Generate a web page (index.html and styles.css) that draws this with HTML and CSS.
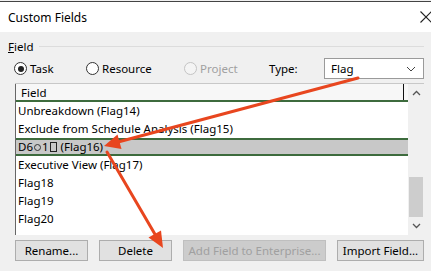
FILE: index.html
```html
<!DOCTYPE html>
<html lang="en">
<head>
    <meta charset="UTF-8">
    <title>Custom Fields</title>
    <link rel="stylesheet" href="styles.css">
</head>
<body>
    <div class="dialog">
        <div class="titlebar">
            <span class="title">Custom Fields</span>
            <svg class="close" width="12" height="12" viewBox="0 0 12 12">
                <path d="M0.5 0.5 L11.5 11.5 M11.5 0.5 L0.5 11.5" stroke="#222" stroke-width="1.1" fill="none"/>
            </svg>
        </div>

        <div class="content">
            <div class="group-label">
                <span><u>F</u>ield</span>
                <div class="group-line"></div>
            </div>

            <div class="options">
                <label class="opt opt-task"><span class="radio checked"></span>Task</label>
                <label class="opt opt-resource"><span class="radio"></span>Resource</label>
                <label class="opt opt-project disabled"><span class="radio"></span>Project</label>
                <span class="type-label">Type:</span>
                <div class="combo">
                    <span>Flag</span>
                    <svg width="10" height="6" viewBox="0 0 10 6">
                        <path d="M1 1 L5 5 L9 1" stroke="#444" stroke-width="1" fill="none"/>
                    </svg>
                </div>
            </div>

            <div class="list">
                <div class="grid">
                    <div class="grid-head">
                        <span>Field</span>
                        <div class="col-end"></div>
                    </div>
                    <div class="row">Unbreakdown (Flag14)</div>
                    <div class="row">Exclude from Schedule Analysis (Flag15)</div>
                    <div class="row selected">D6<span class="ring"></span>1<span class="tofu"></span> (Flag16)</div>
                    <div class="row">Executive View (Flag17)</div>
                    <div class="row">Flag18</div>
                    <div class="row">Flag19</div>
                    <div class="row">Flag20</div>
                </div>
                <div class="scrollbar">
                    <svg class="sb-arrow" width="9" height="6" viewBox="0 0 9 6">
                        <path d="M1 5 L4.5 1.5 L8 5" stroke="#555" stroke-width="1.3" fill="none"/>
                    </svg>
                    <div class="sb-track">
                        <div class="sb-thumb"></div>
                    </div>
                    <svg class="sb-arrow" width="9" height="6" viewBox="0 0 9 6">
                        <path d="M1 1 L4.5 4.5 L8 1" stroke="#555" stroke-width="1.3" fill="none"/>
                    </svg>
                </div>
            </div>

            <div class="buttons">
                <button class="btn btn-rename">Rename...</button>
                <button class="btn btn-delete">Delete</button>
                <button class="btn btn-add" disabled>Add Field to Enterprise...</button>
                <button class="btn btn-import">Import Field...</button>
            </div>
        </div>

        <!-- red annotation arrows drawn over the dialog -->
        <svg class="arrows" width="431" height="271" viewBox="0 0 431 271">
            <g stroke="#e8461f" stroke-width="3" stroke-linecap="round" fill="#e8461f">
                <line x1="358" y1="78" x2="118" y2="142"/>
                <line x1="107" y1="152" x2="156" y2="236"/>
            </g>
            <g fill="#e8461f">
                <polygon points="104,146 121.5,149 117.5,134.5"/>
                <polygon points="163,248 161,230.5 148.5,237.5"/>
            </g>
        </svg>
    </div>
</body>
</html>
```

FILE: styles.css
```css
body {
    margin: 0;
    padding: 0;
    font-family: "Noto Sans", "DejaVu Sans", sans-serif;
    font-size: 11.5px;
    color: #000;
    background: #f0f0f0;
}

.dialog {
    position: relative;
    width: 431px;
    height: 271px;
    overflow: hidden;
    background: #f0f0f0;
}

.titlebar {
    height: 30px;
    background: #fff;
    border-top: 1px solid #444;
    margin-top: 1px;
    display: flex;
    align-items: center;
    justify-content: space-between;
    padding-left: 8px;
}

.title {
    font-size: 12px;
}

.close {
    margin-right: -1px;
}

.content {
    padding: 0 7px 0 15px;
}

.group-label {
    display: flex;
    align-items: center;
    height: 16px;
    margin: 6px 0 0 -7px;
}

.group-line {
    flex: 1;
    height: 1px;
    background: #dcdcdc;
    margin-left: 6px;
}

.options {
    display: flex;
    align-items: center;
    height: 21px;
    margin-top: 4px;
    margin-left: -1px;
}

.opt {
    display: flex;
    align-items: center;
}

.opt-task {
    width: 72px;
}

.opt-resource {
    width: 98px;
}

.opt-project {
    width: 85px;
}

.disabled {
    color: #a0a0a0;
}

.radio {
    width: 11px;
    height: 11px;
    border: 1px solid #333;
    border-radius: 50%;
    background: #fff;
    margin-right: 3px;
    position: relative;
}

.radio.checked::after {
    content: "";
    position: absolute;
    left: 2.5px;
    top: 2.5px;
    width: 6px;
    height: 6px;
    border-radius: 50%;
    background: #222;
}

.disabled .radio {
    border-color: #c4c4c4;
    background: #f4f4f4;
}

.type-label {
    width: 55px;
}

.combo {
    height: 19px;
    border: 1px solid #9a9a9a;
    background: #fff;
    display: flex;
    align-items: center;
    justify-content: space-between;
    padding: 0 7px 0 6px;
    box-sizing: content-box;
    width: 85px;
}

.list {
    display: flex;
    margin-top: 4px;
    height: 152px;
    border-top: 1px solid #c8c8c8;
    box-sizing: border-box;
}

.grid {
    flex: 1;
    background: #fff;
    border-left: 1px solid #666;
}

.grid-head {
    height: 16px;
    background: #f7f7f7;
    border-bottom: 2px solid #3d6b3d;
    display: flex;
    align-items: center;
    padding-left: 5px;
}

.grid-head span {
    flex: 1;
}

.col-end {
    width: 1px;
    height: 100%;
    background: #111;
    margin-right: 4px;
}

.row {
    height: 18px;
    line-height: 18px;
    padding-left: 2px;
    white-space: nowrap;
}

.row.selected {
    background: #c8c8c8;
    box-shadow: inset 0 2px 0 #3d6b3d, inset 0 -2px 0 #3d6b3d;
}

.ring {
    display: inline-block;
    width: 5px;
    height: 5px;
    border: 1px solid #333;
    border-radius: 50%;
    margin: 0 1px;
}

.tofu {
    display: inline-block;
    width: 5px;
    height: 8px;
    border: 1px solid #222;
    margin: 0 1px 0 1px;
    vertical-align: -1px;
}

.scrollbar {
    width: 16px;
    background: #f0f0f0;
    display: flex;
    flex-direction: column;
    align-items: center;
}

.sb-arrow {
    margin: 6px 0;
}

.sb-track {
    flex: 1;
    width: 100%;
    display: flex;
    flex-direction: column;
    justify-content: flex-end;
}

.sb-thumb {
    height: 40px;
    margin: 0 1px;
    background: #cdcdcd;
}

.buttons {
    display: flex;
    gap: 11px;
    margin-top: 5px;
}

.btn {
    height: 21px;
    padding: 0;
    font-family: inherit;
    font-size: 11.5px;
    color: #000;
    background: #e1e1e1;
    border: 1px solid #adadad;
}

.btn-rename,
.btn-delete {
    width: 73px;
}

.btn-add {
    width: 143px;
    background: #cccccc;
    border-color: #bfbfbf;
    color: #a0a0a0;
}

.btn-import {
    width: 87px;
}

.arrows {
    position: absolute;
    left: 0;
    top: 0;
    pointer-events: none;
}
```
